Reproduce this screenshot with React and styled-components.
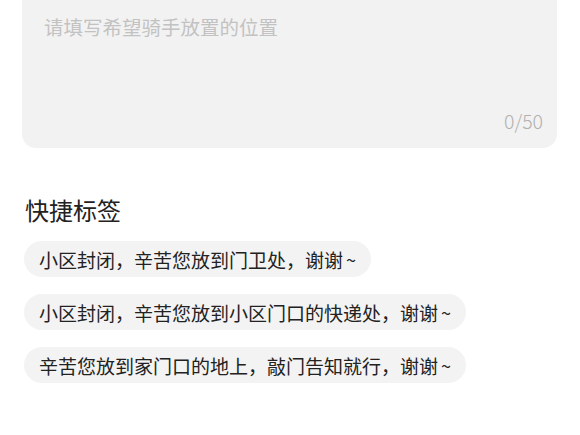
import styled, { createGlobalStyle } from 'styled-components';

const GlobalStyle = createGlobalStyle`
  html, body {
    margin: 0;
    padding: 0;
    background: #ffffff;
  }
  body {
    font-family: "Noto Sans CJK SC", "Noto Sans", sans-serif;
    color: #222222;
  }
`;

const TAGS = [
  '小区封闭，辛苦您放到门卫处，谢谢',
  '小区封闭，辛苦您放到小区门口的快递处，谢谢',
  '辛苦您放到家门口的地上，敲门告知就行，谢谢',
];

const App = () => {
  return (
    <Page>
      <GlobalStyle />
      <NoteBox>
        <Placeholder>请填写希望骑手放置的位置</Placeholder>
        <Counter>0/50</Counter>
      </NoteBox>
      <Title>快捷标签</Title>
      <TagList>
        {TAGS.map((tag) => (
          <Tag key={tag}>
            {tag}
            <Tilde>~</Tilde>
          </Tag>
        ))}
      </TagList>
    </Page>
  );
};

const Page = styled.div`
  width: 580px;
  height: 435px;
  overflow: hidden;
  padding: 0 23px 0 22px;
  box-sizing: border-box;
`;

const NoteBox = styled.div`
  margin-top: -16px;
  height: 164px;
  box-sizing: border-box;
  padding: 29px 14px 14px 22px;
  background: #f2f2f2;
  border-radius: 14px;
  display: flex;
  flex-direction: column;
  justify-content: space-between;
`;

const Placeholder = styled.div`
  font-size: 19.5px;
  line-height: 28px;
  color: #c2c2c2;
`;

const Counter = styled.div`
  align-self: flex-end;
  font-size: 19.5px;
  font-weight: 300;
  line-height: 26px;
  color: #b0b0b0;
`;

const Title = styled.h2`
  margin: 45px 0 0 3px;
  font-size: 24px;
  font-weight: 400;
  line-height: 34px;
  color: #222222;
`;

const TagList = styled.div`
  margin-top: 14px;
  display: flex;
  flex-direction: column;
  align-items: flex-start;
  gap: 17px;
`;

const Tag = styled.div`
  height: 36px;
  line-height: 36px;
  padding: 0 15px;
  margin-left: 2px;
  border-radius: 18px;
  background: #f3f3f3;
  font-size: 19px;
  color: #222222;
  white-space: nowrap;
`;

const Tilde = styled.span`
  display: inline-block;
  margin-left: 3px;
  font-size: 18px;
  vertical-align: 1px;
`;

export default App;
